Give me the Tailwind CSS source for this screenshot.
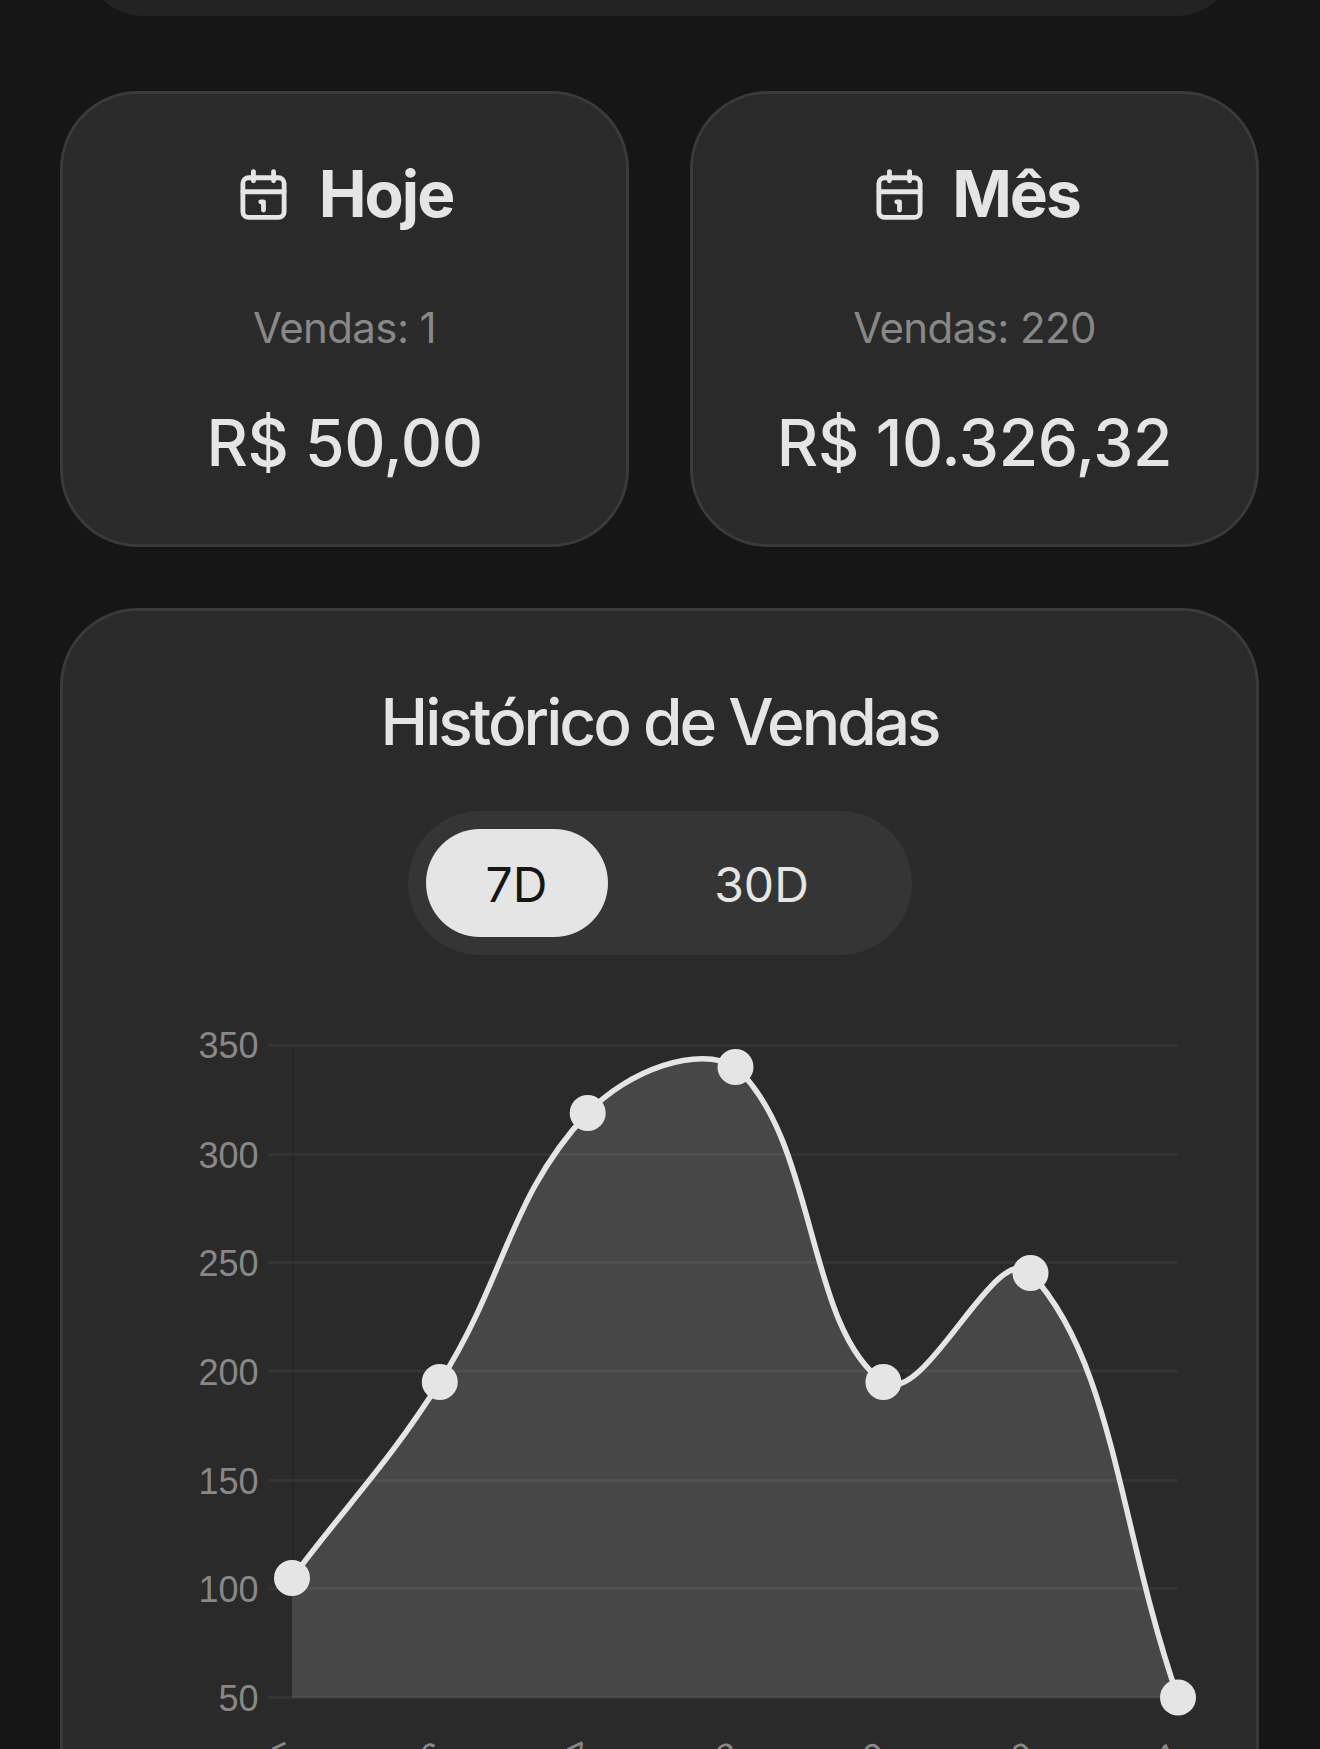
<!doctype html>
<html lang="pt-BR">
<head>
<meta charset="utf-8">
<script src="https://cdn.jsdelivr.net/npm/@tailwindcss/browser@4"></script>
</head>
<body class="bg-[#161616]">
<div class="h-[1749px] overflow-hidden bg-[#161616] font-['Inter',sans-serif] text-[#e5e5e5]">
  <div class="mx-[84px] -mt-[104px] h-[120px] rounded-b-[60px] bg-[#232323]"></div>
  <div class="pl-[60px] pr-[61px] pt-[75px]">
    <div class="grid grid-cols-2 gap-[61px]">
      <div class="flex h-[456px] flex-col items-center rounded-[78px] border-[3px] border-[#3a3a3a] bg-[#2a2a2a] pt-[62px]">
        <div class="flex items-center gap-[28px]">
          <svg class="h-[55px] w-[55px]" viewBox="0 0 24 24" fill="none" stroke="currentColor" stroke-width="2.1" stroke-linecap="round" stroke-linejoin="round"><path d="M7.6 2v4"/><path d="M16.4 2v4"/><rect x="3" y="4.7" width="18" height="17.3" rx="2.5"/><path d="M3 10.8h18"/><path d="M10.8 15.2h1.2v3.6"/></svg>
          <span class="text-[64px] leading-[76px] font-bold tracking-[-2px]">Hoje</span>
        </div>
        <p class="mt-[68px] text-[42px] leading-[56px] tracking-[-0.6px] text-[#888888]">Vendas: 1</p>
        <p class="mt-[47px] text-[64px] leading-[80px] font-medium tracking-[-0.4px]">R$ 50,00</p>
      </div>
      <div class="flex h-[456px] flex-col items-center rounded-[78px] border-[3px] border-[#3a3a3a] bg-[#2a2a2a] pt-[62px]">
        <div class="ml-[3px] flex items-center gap-[25px]">
          <svg class="h-[55px] w-[55px]" viewBox="0 0 24 24" fill="none" stroke="currentColor" stroke-width="2.1" stroke-linecap="round" stroke-linejoin="round"><path d="M7.6 2v4"/><path d="M16.4 2v4"/><rect x="3" y="4.7" width="18" height="17.3" rx="2.5"/><path d="M3 10.8h18"/><path d="M10.8 15.2h1.2v3.6"/></svg>
          <span class="text-[64px] leading-[76px] font-bold tracking-[-2px]">Mês</span>
        </div>
        <p class="mt-[68px] text-[42px] leading-[56px] tracking-[-0.6px] text-[#888888]">Vendas: 220</p>
        <p class="mt-[47px] text-[64px] leading-[80px] font-medium tracking-[-0.3px]">R$ 10.326,32</p>
      </div>
    </div>
    <div class="mt-[61px] flex h-[1300px] flex-col items-center rounded-t-[78px] border-[3px] border-[#3a3a3a] bg-[#2a2a2a] pt-[71px]">
      <h2 class="text-[64px] leading-[80px] font-medium tracking-[-3px]">Histórico de Vendas</h2>
      <div class="mt-[49px] flex h-[144px] w-[504px] items-center rounded-[72px] bg-[#353535] px-[18px]">
        <button class="h-[108px] w-[182px] shrink-0 rounded-[54px] bg-[#e5e5e5] pt-[4px] text-[48px] font-normal text-[#161616]">7D</button>
        <button class="h-[108px] w-[286px] shrink-0 pl-[22px] pt-[4px] text-[48px] font-normal text-[#e5e5e5]">30D</button>
      </div>
      <svg class="mt-[65px] block h-[760px] w-[1194px] shrink-0" viewBox="63 1020 1194 760" font-family="Liberation Sans, sans-serif" font-size="36" fill="#888888">
        <path d="M293 1045V1697" stroke="#262626" stroke-width="3" fill="none"/>
        <path fill="#474747" d="M292 1578C351 1499.6 387.3 1464.7 439.8 1382C505.6 1278.7 509 1196.7 587.7 1113C627.4 1070.7 699 1044.4 735.5 1067C817.3 1141.5 806 1328 883.4 1382C924 1410.4 996.3 1236.5 1030.5 1273C1114 1362.7 1118.8 1527.7 1178 1697.5L292 1697.5Z"/>
        <g stroke="#ffffff" stroke-opacity="0.05" stroke-width="3">
          <path d="M268 1045.5H1178"/><path d="M268 1154.5H1178"/><path d="M268 1262.5H1178"/><path d="M268 1371H1178"/><path d="M268 1480.5H1178"/><path d="M268 1588.5H1178"/><path d="M268 1697.5H1178"/>
        </g>
        <path fill="none" stroke="#e5e5e5" stroke-width="5.5" d="M292 1578C351 1499.6 387.3 1464.7 439.8 1382C505.6 1278.7 509 1196.7 587.7 1113C627.4 1070.7 699 1044.4 735.5 1067C817.3 1141.5 806 1328 883.4 1382C924 1410.4 996.3 1236.5 1030.5 1273C1114 1362.7 1118.8 1527.7 1178 1697.5"/>
        <g fill="#e5e5e5">
          <circle cx="292" cy="1578" r="18"/><circle cx="439.8" cy="1382" r="18"/><circle cx="587.7" cy="1113" r="18"/><circle cx="735.5" cy="1067" r="18"/><circle cx="883.4" cy="1382" r="18"/><circle cx="1030.5" cy="1273" r="18"/><circle cx="1178" cy="1697.5" r="18"/>
        </g>
        <g text-anchor="end">
          <text x="258.5" y="1058">350</text><text x="258.5" y="1168">300</text><text x="258.5" y="1276">250</text><text x="258.5" y="1385">200</text><text x="258.5" y="1494">150</text><text x="258.5" y="1602">100</text><text x="258.5" y="1711">50</text>
        </g>
        <g text-anchor="end">
          <text transform="translate(298 1763) rotate(-25)">5</text>
          <text transform="translate(446 1763) rotate(-25)">6</text>
          <text transform="translate(594 1763) rotate(-25)">7</text>
          <text transform="translate(742 1763) rotate(-25)">8</text>
          <text transform="translate(889 1763) rotate(-25)">9</text>
          <text transform="translate(1037 1763) rotate(-25)">0</text>
          <text transform="translate(1184 1763) rotate(-25)">1</text>
        </g>
      </svg>
    </div>
  </div>
</div>
</body>
</html>
